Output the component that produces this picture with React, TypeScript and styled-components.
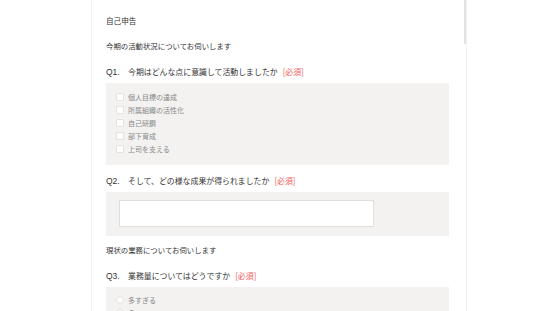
import React from 'react';
import styled, { createGlobalStyle } from 'styled-components';

const Global = createGlobalStyle`
  html, body {
    margin: 0;
    padding: 0;
    background: #fff;
    overflow: hidden;
  }
  body {
    font-family: "Noto Sans CJK JP", "Noto Sans", sans-serif;
    color: #333;
  }
`;

const Card = styled.div`
  position: relative;
  margin-left: 91px;
  width: 376px;
  height: 311px;
  overflow: hidden;
  border-left: 1px solid #f0f0f0;
  border-right: 1px solid #f0f0f0;
  padding: 14px 17px 0 14px;
  box-sizing: border-box;
`;

const Thumb = styled.div`
  position: absolute;
  top: 0;
  right: -1px;
  width: 3px;
  height: 44px;
  background: #e2e2e2;
`;

const Title = styled.div`
  font-size: 7.6px;
  line-height: 14px;
`;

const Heading = styled.div<{ $top: number }>`
  font-size: 7.4px;
  line-height: 14px;
  margin-top: ${p => p.$top}px;
`;

const QHead = styled.div<{ $top: number }>`
  display: flex;
  align-items: center;
  font-size: 7.9px;
  line-height: 14px;
  margin-top: ${p => p.$top}px;
  white-space: nowrap;
`;

const QNum = styled.span`
  width: 22px;
  font-family: "Liberation Sans", "Noto Sans CJK JP", sans-serif;
  font-size: 8.5px;
`;

const Required = styled.span`
  color: #f25a5a;
  margin-left: 5px;
`;

const Panel = styled.div<{ $pad: string }>`
  margin-top: 4px;
  background: #f3f2f0;
  padding: ${p => p.$pad};
`;

const Option = styled.label`
  display: flex;
  align-items: center;
  height: 13px;
  font-size: 7px;
  color: #888;
`;

const Box = styled.span<{ $round?: boolean }>`
  width: 8px;
  height: 8px;
  box-sizing: border-box;
  background: #fff;
  border: 1px solid #e2e2e2;
  border-radius: ${p => (p.$round ? '50%' : '1px')};
  margin-right: 4px;
  flex: none;
`;

const TextBox = styled.div`
  width: 255px;
  height: 27px;
  box-sizing: border-box;
  background: #fff;
  border: 1px solid #dedede;
`;

const q1Options = ['個人目標の達成', '所属組織の活性化', '自己研鑽', '部下育成', '上司を支える'];
const q3Options = ['多すぎる', '多い', 'ちょうどよい', '少ない'];

function App() {
  return (
    <>
      <Global />
      <Card>
        <Thumb />
        <Title>自己申告</Title>
        <Heading $top={11}>今期の活動状況についてお伺いします</Heading>

        <QHead $top={12}>
          <QNum>Q1.</QNum>今期はどんな点に意識して活動しましたか<Required>[必須]</Required>
        </QHead>
        <Panel $pad="7px 0 10px 10px">
          {q1Options.map(o => (
            <Option key={o}><Box />{o}</Option>
          ))}
        </Panel>

        <QHead $top={9}>
          <QNum>Q2.</QNum>そして、どの様な成果が得られましたか<Required>[必須]</Required>
        </QHead>
        <Panel $pad="8px 0 9px 13px">
          <TextBox />
        </Panel>

        <Heading $top={7}>現状の業務についてお伺いします</Heading>

        <QHead $top={12}>
          <QNum>Q3.</QNum>業務量についてはどうですか<Required>[必須]</Required>
        </QHead>
        <Panel $pad="6px 0 10px 10px">
          {q3Options.map(o => (
            <Option key={o}><Box $round />{o}</Option>
          ))}
        </Panel>
      </Card>
    </>
  );
}

export default App;
